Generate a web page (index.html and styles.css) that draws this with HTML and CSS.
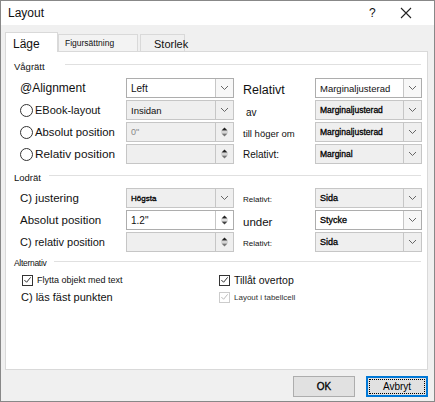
FILE: index.html
```html
<!DOCTYPE html>
<html>
<head>
<meta charset="utf-8">
<link rel="stylesheet" href="styles.css">
</head>
<body>
<div class="dialog">
  <div class="titlebar">
    <span class="title">Layout</span>
    <span class="help">?</span>
    <svg class="close" width="12" height="12" viewBox="0 0 12 12"><path d="M1 1L11 11M11 1L1 11" stroke="#222" stroke-width="1.1" fill="none"/></svg>
  </div>
  <div class="body">
    <div class="tabs">
      <div class="tab active">Läge</div>
      <div class="tab t2">Figursättning</div>
      <div class="tab t3">Storlek</div>
    </div>
    <div class="panel">
      <div class="section"><span class="sec-title wide">Vågrätt</span><span class="rule"></span></div>
      <div class="grid h">
        <div class="lbl f12">@Alignment</div>
        <div class="combo white"><span class="val f10">Left</span><span class="arrow"><svg width="9" height="6" viewBox="0 0 9 6"><path d="M1 1L4.5 4.5L8 1" stroke="#666" fill="none"/></svg></span></div>
        <div class="lbl2 f125 lowish">Relativt</div>
        <div class="combo white"><span class="val f95">Marginaljusterad</span><span class="arrow"><svg width="9" height="6" viewBox="0 0 9 6"><path d="M1 1L4.5 4.5L8 1" stroke="#666" fill="none"/></svg></span></div>

        <div class="lbl f11"><span class="radio"></span>EBook-layout</div>
        <div class="combo gray"><span class="val f95">Insidan</span><span class="arrow"><svg width="9" height="6" viewBox="0 0 9 6"><path d="M1 1L4.5 4.5L8 1" stroke="#666" fill="none"/></svg></span></div>
        <div class="lbl2 f10 low av">av</div>
        <div class="combo gray"><span class="val f85 semi">Marginaljusterad</span><span class="arrow"><svg width="9" height="6" viewBox="0 0 9 6"><path d="M1 1L4.5 4.5L8 1" stroke="#666" fill="none"/></svg></span></div>

        <div class="lbl f113"><span class="radio"></span>Absolut position</div>
        <div class="combo gray dis"><span class="val light f9">0"</span><span class="spin"><svg width="7" height="12" viewBox="0 0 7 12"><path d="M0.5 4.5L3.5 1.5L6.5 4.5Z" fill="#222"/><path d="M0.5 7.5L3.5 10.5L6.5 7.5Z" fill="#777"/><path d="M0 6H7" stroke="#999" stroke-width="0.6"/></svg></span></div>
        <div class="lbl2 f95 lowish">till höger om</div>
        <div class="combo gray"><span class="val f85 semi">Marginaljusterad</span><span class="arrow"><svg width="9" height="6" viewBox="0 0 9 6"><path d="M1 1L4.5 4.5L8 1" stroke="#666" fill="none"/></svg></span></div>

        <div class="lbl f118"><span class="radio"></span>Relativ position</div>
        <div class="combo gray dis"><span class="val"></span><span class="spin"><svg width="7" height="12" viewBox="0 0 7 12"><path d="M0.5 4.5L3.5 1.5L6.5 4.5Z" fill="#222"/><path d="M0.5 7.5L3.5 10.5L6.5 7.5Z" fill="#777"/><path d="M0 6H7" stroke="#999" stroke-width="0.6"/></svg></span></div>
        <div class="lbl2 f10">Relativt:</div>
        <div class="combo gray"><span class="val f85 semi">Marginal</span><span class="arrow"><svg width="9" height="6" viewBox="0 0 9 6"><path d="M1 1L4.5 4.5L8 1" stroke="#666" fill="none"/></svg></span></div>
      </div>

      <div class="section s2"><span class="sec-title">Lodrät</span><span class="rule"></span></div>
      <div class="grid v">
        <div class="lbl f115">C) justering</div>
        <div class="combo gray"><span class="val f8 semi">Högsta</span><span class="arrow"><svg width="9" height="6" viewBox="0 0 9 6"><path d="M1 1L4.5 4.5L8 1" stroke="#666" fill="none"/></svg></span></div>
        <div class="lbl2 f8 lowish">Relativt:</div>
        <div class="combo gray"><span class="val f9 semi">Sida</span><span class="arrow"><svg width="9" height="6" viewBox="0 0 9 6"><path d="M1 1L4.5 4.5L8 1" stroke="#666" fill="none"/></svg></span></div>

        <div class="lbl f115">Absolut position</div>
        <div class="combo white"><span class="val f10">1.2"</span><span class="spin"><svg width="7" height="12" viewBox="0 0 7 12"><path d="M0.5 4.5L3.5 1.5L6.5 4.5Z" fill="#222"/><path d="M0.5 7.5L3.5 10.5L6.5 7.5Z" fill="#444"/><path d="M0 6H7" stroke="#999" stroke-width="0.6"/></svg></span></div>
        <div class="lbl2 f115 lowish">under</div>
        <div class="combo white"><span class="val f9 semi">Stycke</span><span class="arrow"><svg width="9" height="6" viewBox="0 0 9 6"><path d="M1 1L4.5 4.5L8 1" stroke="#666" fill="none"/></svg></span></div>

        <div class="lbl f11">C) relativ position</div>
        <div class="combo gray dis"><span class="val"></span><span class="spin"><svg width="7" height="12" viewBox="0 0 7 12"><path d="M0.5 4.5L3.5 1.5L6.5 4.5Z" fill="#222"/><path d="M0.5 7.5L3.5 10.5L6.5 7.5Z" fill="#777"/><path d="M0 6H7" stroke="#999" stroke-width="0.6"/></svg></span></div>
        <div class="lbl2 f8 lowish">Relativt:</div>
        <div class="combo gray"><span class="val f9 semi">Sida</span><span class="arrow"><svg width="9" height="6" viewBox="0 0 9 6"><path d="M1 1L4.5 4.5L8 1" stroke="#666" fill="none"/></svg></span></div>
      </div>

      <div class="section s3"><span class="sec-title tinyt">Alternativ</span><span class="rule"></span></div>
      <div class="opts">
        <div class="col first">
          <div class="chk f9"><span class="box"><svg width="10" height="10" viewBox="0 0 10 10"><path d="M1.5 5L4 7.5L8.5 2" stroke="#333" stroke-width="1.1" fill="none"/></svg></span>Flytta objekt med text</div>
          <div class="opt f11">C) läs fäst punkten</div>
        </div>
        <div class="col">
          <div class="chk f105"><span class="box"><svg width="10" height="10" viewBox="0 0 10 10"><path d="M1.5 5L4 7.5L8.5 2" stroke="#333" stroke-width="1.1" fill="none"/></svg></span>Tillåt overtop</div>
          <div class="chk f8 dis"><span class="box"><svg width="10" height="10" viewBox="0 0 10 10"><path d="M1.5 5L4 7.5L8.5 2" stroke="#bbb" stroke-width="1.1" fill="none"/></svg></span>Layout i tabellcell</div>
        </div>
      </div>
    </div>
    <div class="buttons">
      <button class="btn ok">OK</button>
      <button class="btn focus"><span>Avbryt</span></button>
    </div>
  </div>
</div>
</body>
</html>
```
FILE: styles.css
```css
* { box-sizing: border-box; }
html, body { margin: 0; padding: 0; }
body { width: 435px; height: 402px; font-family: "Liberation Sans", Arial, sans-serif; color: #111; overflow: hidden; }
.dialog { width: 435px; height: 402px; border: 1px solid #888; display: flex; flex-direction: column; background: #f0f0f0; }
.titlebar { height: 24px; background: #fff; display: flex; align-items: center; padding-left: 7px; font-size: 12px; }
.title { flex: 1; }
.help { width: 14px; margin-right: 17px; font-size: 12px; }
.close { margin-right: 22px; }
.body { flex: 1; padding: 6px 6px 0 4px; display: flex; flex-direction: column; }
.tabs { display: flex; height: 20px; align-items: flex-end; }
.tab { border: 1px solid #d9d9d9; border-bottom: none; background: #f0f0f0; height: 17px; font-size: 12px; }
.tab.active { background: #fff; height: 20px; width: 53px; padding: 4px 0 0 7px; margin-bottom: -1px; position: relative; z-index: 1; }
.tab.t2 { width: 80px; font-size: 8.5px; padding: 3px 0 0 6px; background: #f3f3f3; }
.tab.t3 { width: 45px; margin-left: 2px; padding: 3px 0 0 13px; font-size: 11px; }
.panel { background: #fff; border: 1px solid #d9d9d9; height: 319px; padding: 7px 6px 0 8px; }
.section { display: flex; align-items: center; height: 14px; }
.sec-title { font-size: 9.5px; margin-right: 8px; }
.sec-title.wide { margin-right: 20px; }
.tinyt { font-size: 8.5px; letter-spacing: -0.3px; }
.rule { flex: 1; height: 1px; background: #e0e0e0; margin-bottom: 4px; }
.grid { display: grid; grid-template-columns: 106px 108px 81px 107px; margin-left: 6px; align-items: center; grid-auto-rows: 20px; row-gap: 2px; }
.grid.h { margin-top: 5px; }
.grid.v { margin-top: 4px; }
.s2 { margin-top: 6px; }
.s3 { margin-top: 4px; }
.lbl { display: flex; align-items: center; white-space: nowrap; }
.lbl2 { padding-left: 9px; white-space: nowrap; }
.av { padding-left: 12px; }
.f8 { font-size: 8px; }
.f85 { font-size: 8.5px; }
.f9 { font-size: 9px; }
.f95 { font-size: 9.5px; }
.f10 { font-size: 10px; }
.f105 { font-size: 10.5px; }
.f11 { font-size: 11px; }
.f113 { font-size: 11.3px; }
.f115 { font-size: 11.5px; }
.f118 { font-size: 11.8px; }
.f12 { font-size: 12px; }
.f125 { font-size: 12.5px; }
.semi { color: #000; -webkit-text-stroke: 0.3px #000; }
.low { padding-top: 5px; }
.lowish { padding-top: 3px; }
.radio { width: 13px; height: 13px; border: 1px solid #333; border-radius: 50%; margin-right: 2px; flex: none; }
.combo { height: 20px; border: 1px solid #adadad; display: flex; align-items: stretch; }
.combo.white { background: #fff; }
.combo.gray { background: #efefef; border-color: #c6c6c6; }
.val { flex: 1; padding-left: 4px; display: flex; align-items: center; white-space: nowrap; overflow: hidden; }
.val.light { color: #888; }
.arrow { width: 18px; border-left: 1px solid #c6c6c6; display: flex; align-items: center; justify-content: center; }
.combo.white .arrow { background: #f7f7f7; }
.spin { width: 18px; border-left: 1px solid #c6c6c6; display: flex; align-items: center; justify-content: center; }
.opts { display: flex; margin-left: 8px; margin-top: 2px; }
.col { display: flex; flex-direction: column; }
.col.first { width: 197px; }
.chk { display: flex; align-items: center; height: 16px; white-space: nowrap; }
.box { width: 11px; height: 11px; border: 1px solid #333; background: #fff; margin-right: 4px; display: flex; align-items: center; justify-content: center; flex: none; }
.chk.dis { color: #333; margin-top: 1px; }
.chk.dis .box { border-color: #ccc; }
.opt { margin-top: 1px; height: 16px; display: flex; align-items: center; margin-left: -1px; }
.buttons { display: flex; justify-content: flex-end; gap: 11px; padding-top: 6px; }
.btn { width: 62px; height: 21px; background: #e1e1e1; border: 1px solid #adadad; font-family: "Liberation Sans", Arial, sans-serif; font-size: 10px; color: #000; padding: 0; }
.btn.ok { -webkit-text-stroke: 0.3px #000; }
.btn.focus { border: 1px solid #0078d7; box-shadow: inset 0 0 0 1px #0078d7; padding: 2px; }
.btn.focus span { display: flex; align-items: center; justify-content: center; height: 100%; border: 1px dotted #000; }
```
